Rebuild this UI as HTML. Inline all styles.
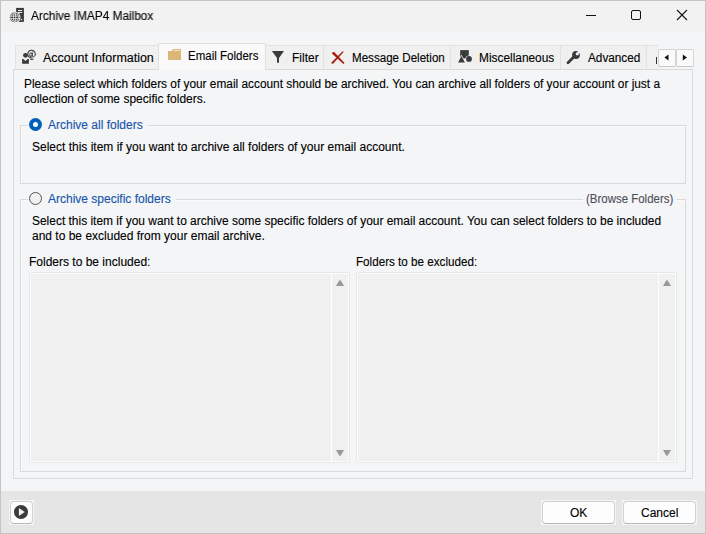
<!DOCTYPE html>
<html><head><meta charset="utf-8">
<style>
*{box-sizing:border-box;margin:0;padding:0}
html,body{width:706px;height:534px;overflow:hidden;background:#f4f5f7;font-family:"Liberation Sans",sans-serif;font-size:12px;color:#000}
.a{position:absolute}
.t{position:absolute;white-space:pre;line-height:15px;transform-origin:0 0;-webkit-text-stroke:0.12px currentColor}
#win{position:absolute;left:0;top:0;width:706px;height:534px;border:1px solid #c4c4c4;background:#f4f5f7}
#title{position:absolute;left:0;top:0;width:706px;height:31px;background:#f2f2f2}
.tab{position:absolute;background:#f0f0f0;border:1px solid #e2e2e2;border-bottom:none}
.tabsel{position:absolute;background:#f9f9f9;border:1px solid #e0e0e0;border-bottom:none;border-radius:2px 2px 0 0}
#page{position:absolute;left:13px;top:69px;width:680px;height:410px;border:1px solid #dadada;background:#f4f5f7}
.grp{position:absolute;border:1px solid #d9d9d9;box-shadow:inset 1px 1px 0 #fbfbfc}
.lb{position:absolute;border:1px solid #e6e7e9;border-radius:2px;background:#f0f0f0;box-shadow:inset 0 0 0 1px #fcfcfc}
#bottom{position:absolute;left:1px;top:491px;width:704px;height:42px;background:#e5e5e5}
.btn{position:absolute;background:#fdfdfd;border:1px solid #d0d0d0;border-bottom-color:#b8b8b8;border-radius:4px}
.bo{position:absolute;background:#f3f4f6}
.blue{color:#1654aa}
</style></head><body>
<div id="win">
</div>
<div id="title"></div>
<div class="a" style="left:0;top:0;width:706px;height:1px;background:#c4c4c4"></div>

<!-- title icon -->
<svg class="a" style="left:9px;top:7px" width="18" height="17" viewBox="0 0 18 17">
  <rect x="7.1" y="0.9" width="7.8" height="14" fill="#3a3a3a"/>
  <rect x="9" y="3" width="4.1" height="1" fill="#f2f2f2"/>
  <rect x="9" y="5" width="4.1" height="1" fill="#f2f2f2"/>
  <rect x="12" y="12" width="1.2" height="1.2" fill="#f2f2f2"/>
  <circle cx="5.65" cy="10.4" r="5.9" fill="#f2f2f2"/>
  <circle cx="5.65" cy="10.4" r="4.9" fill="#3a3a3a"/>
  <circle cx="5.65" cy="10.4" r="3.9" fill="none" stroke="#f2f2f2" stroke-width="0.7"/>
  <ellipse cx="5.65" cy="10.4" rx="1.1" ry="4.6" fill="none" stroke="#f2f2f2" stroke-width="0.8"/>
  <path d="M0.5 9.1h10.5M0.5 11.7h10.5" stroke="#f2f2f2" stroke-width="0.8" fill="none"/>
</svg>
<div class="t" style="left:31px;top:9px;color:#000;transform:scaleX(0.986);will-change:transform">Archive IMAP4 Mailbox</div>

<!-- window controls -->
<div class="a" style="left:586px;top:15px;width:10px;height:1px;background:#111"></div>
<div class="a" style="left:631px;top:10px;width:10px;height:10px;border:1px solid #111;border-radius:2px"></div>
<svg class="a" style="left:676px;top:9px" width="12" height="12" viewBox="0 0 12 12"><path d="M1 1L11 11M11 1L1 11" stroke="#111" stroke-width="1.1"/></svg>

<!-- page -->
<div id="page"></div>

<!-- tabs -->
<div class="tab" style="left:15px;top:45px;width:144px;height:24px"></div>
<div class="tab" style="left:265px;top:45px;width:59px;height:24px"></div>
<div class="tab" style="left:323px;top:45px;width:128px;height:24px"></div>
<div class="tab" style="left:450px;top:45px;width:111px;height:24px"></div>
<div class="tab" style="left:560px;top:45px;width:87px;height:24px"></div>
<div class="tab" style="left:646px;top:45px;width:12px;height:24px;border-right:none"></div>
<div class="tabsel" style="left:158px;top:43px;width:108px;height:27px"></div>

<!-- tab icons -->
<svg class="a" style="left:21px;top:49px" width="16" height="16" viewBox="0 0 16 16">
  <circle cx="4.5" cy="6.35" r="2.4" fill="#3a3a3a"/>
  <path d="M1.1 9.9H2.4L4.5 11.9L6.6 9.9H7.9V14.8H1.1z" fill="#3a3a3a"/>
  <path d="M14.2 6.1A3.8 3.8 0 1 0 11.5 8.8" fill="none" stroke="#3a3a3a" stroke-width="1.1"/>
  <ellipse cx="9.9" cy="5.7" rx="1.2" ry="1.9" fill="none" stroke="#3a3a3a" stroke-width="1"/>
  <path d="M11.3 3.4V7Q11.5 8 12.5 7.8Q14 7.3 14.2 6.1" fill="none" stroke="#3a3a3a" stroke-width="1"/>
  <rect x="9.2" y="9.8" width="3.3" height="1" fill="#3a3a3a"/>
</svg>
<div class="t" style="left:43px;top:51px;transform:scaleX(1.038)">Account Information</div>

<svg class="a" style="left:167px;top:48px" width="15" height="13" viewBox="0 0 15 13">
  <path d="M1 3H5L6 1H14V12H1z" fill="#dbb676"/>
  <rect x="7" y="2" width="6" height="1" fill="#f3e6cc"/>
</svg>
<div class="t" style="left:188px;top:49px;transform:scaleX(0.96)">Email Folders</div>

<svg class="a" style="left:271px;top:50px" width="14" height="14" viewBox="0 0 14 14">
  <path d="M0.9 1H13L8 8V12.7H6V8z" fill="#3a3a3a"/>
</svg>
<div class="t" style="left:292px;top:51px">Filter</div>

<svg class="a" style="left:330px;top:50px" width="16" height="15" viewBox="0 0 16 15">
  <path d="M1.9 3.6Q2.2 1.6 4.2 2L14.6 13L13.4 13.9z" fill="#a8200c"/>
  <path d="M12.6 1.3L13.8 1.8L3.6 13.2Q2 14.4 1.2 12.8z" fill="#a8200c"/>
</svg>
<div class="t" style="left:352px;top:51px;transform:scaleX(0.966)">Message Deletion</div>

<svg class="a" style="left:456px;top:48px" width="18" height="16" viewBox="0 0 18 16">
  <rect x="4.2" y="2.1" width="8.6" height="8.3" fill="#3a3a3a"/>
  <path d="M5.5 8.1L8.9 14.5H2.1z" fill="#3a3a3a" stroke="#f0f0f0" stroke-width="1.2" paint-order="stroke"/>
  <circle cx="13" cy="10.9" r="2.9" fill="#3a3a3a" stroke="#f0f0f0" stroke-width="1.2" paint-order="stroke"/>
</svg>
<div class="t" style="left:479px;top:51px;transform:scaleX(0.99)">Miscellaneous</div>

<svg class="a" style="left:566px;top:50px" width="15" height="15" viewBox="0 0 15 15">
  <path d="M2 12.8L8.5 6.3" stroke="#3a3a3a" stroke-width="2.8" stroke-linecap="round"/>
  <circle cx="10" cy="5" r="3.9" fill="#3a3a3a"/>
  <circle cx="11.3" cy="3.8" r="1.6" fill="#f0f0f0"/>
  <path d="M11.3 3.8L12 0L15 3z" fill="#f0f0f0"/>
</svg>
<div class="t" style="left:588px;top:51px;transform:scaleX(0.98)">Advanced</div>
<div class="a" style="left:656px;top:57px;width:1px;height:7px;background:#333"></div>

<!-- scroll arrows -->
<div class="a" style="left:658px;top:49px;width:18px;height:18px;background:#fafafa;border:1px solid #d4d4d4;border-bottom-color:#c6c6c6;border-radius:2px"></div>
<div class="a" style="left:676px;top:49px;width:18px;height:18px;background:#fafafa;border:1px solid #d4d4d4;border-bottom-color:#c6c6c6;border-radius:2px"></div>
<svg class="a" style="left:664px;top:54px" width="6" height="8"><path d="M4.5 0.6v6L0.4 3.6z" fill="#111"/></svg>
<svg class="a" style="left:682px;top:54px" width="6" height="8"><path d="M0.8 0.6v6L5 3.6z" fill="#111"/></svg>

<!-- page content -->
<div class="t" style="left:24px;top:77px;transform:scaleX(0.988)">Please select which folders of your email account should be archived. You can archive all folders of your account or just a</div>
<div class="t" style="left:24px;top:92px">collection of some specific folders.</div>

<div class="grp" style="left:20px;top:125px;width:666px;height:59px"></div>
<div class="a" style="left:28px;top:116px;width:120px;height:16px;background:#f4f5f7"></div>
<div class="a" style="left:29px;top:118px;width:13px;height:13px;border-radius:50%;background:#005fb8"></div>
<div class="a" style="left:33px;top:122px;width:5px;height:5px;border-radius:50%;background:#fff"></div>
<div class="t blue" style="left:48px;top:118px">Archive all folders</div>
<div class="t" style="left:32px;top:140px">Select this item if you want to archive all folders of your email account.</div>

<div class="grp" style="left:20px;top:199px;width:666px;height:273px"></div>
<div class="a" style="left:28px;top:190px;width:148px;height:16px;background:#f4f5f7"></div>
<div class="a" style="left:583px;top:190px;width:94px;height:16px;background:#f4f5f7"></div>
<div class="a" style="left:29px;top:192px;width:13px;height:13px;border-radius:50%;background:#f0f0f0;border:1px solid #555"></div>
<div class="t blue" style="left:48px;top:192px">Archive specific folders</div>
<div class="t" style="left:586px;top:192px;color:#4f4f5c;transform:scaleX(0.955)">(Browse Folders)</div>
<div class="t" style="left:32px;top:214px;transform:scaleX(0.996)">Select this item if you want to archive some specific folders of your email account. You can select folders to be included</div>
<div class="t" style="left:32px;top:229px">and to be excluded from your email archive.</div>

<div class="t" style="left:29px;top:255px">Folders to be included:</div>
<div class="t" style="left:356px;top:255px;transform:scaleX(0.971)">Folders to be excluded:</div>

<div class="lb" style="left:29px;top:272px;width:321px;height:191px"></div>
<div class="a" style="left:331px;top:273px;width:1px;height:189px;background:#fff"></div>
<svg class="a" style="left:336px;top:280px" width="8" height="6"><path d="M0 6L3.2 0.6Q4 -0.2 4.8 0.6L8 6z" fill="#999"/></svg>
<svg class="a" style="left:336px;top:450px" width="8" height="6"><path d="M0 0L3.2 5.4Q4 6.2 4.8 5.4L8 0z" fill="#999"/></svg>

<div class="lb" style="left:356px;top:272px;width:321px;height:191px"></div>
<div class="a" style="left:658px;top:273px;width:1px;height:189px;background:#fff"></div>
<svg class="a" style="left:663px;top:280px" width="8" height="6"><path d="M0 6L3.2 0.6Q4 -0.2 4.8 0.6L8 6z" fill="#999"/></svg>
<svg class="a" style="left:663px;top:450px" width="8" height="6"><path d="M0 0L3.2 5.4Q4 6.2 4.8 5.4L8 0z" fill="#999"/></svg>

<!-- bottom bar -->
<div id="bottom"></div>
<div class="bo" style="left:9px;top:500px;width:25px;height:25px"></div><div class="btn" style="left:10px;top:501px;width:23px;height:23px"></div>
<svg class="a" style="left:14px;top:505px" width="14" height="14" viewBox="0 0 14 14"><circle cx="7" cy="7" r="7" fill="#3a3a3a"/><path d="M4.9 3L10.8 7L4.9 11z" fill="#eee"/></svg>
<div class="bo" style="left:541px;top:500px;width:75px;height:25px"></div><div class="btn" style="left:542px;top:501px;width:73px;height:23px"></div>
<div class="t" style="left:570px;top:506px">OK</div>
<div class="bo" style="left:622px;top:500px;width:75px;height:25px"></div><div class="btn" style="left:623px;top:501px;width:73px;height:23px"></div>
<div class="t" style="left:641px;top:506px">Cancel</div>

<!-- window border -->
<div class="a" style="left:0;top:0;width:706px;height:534px;border:1px solid #c4c4c4;pointer-events:none"></div>
</body></html>
